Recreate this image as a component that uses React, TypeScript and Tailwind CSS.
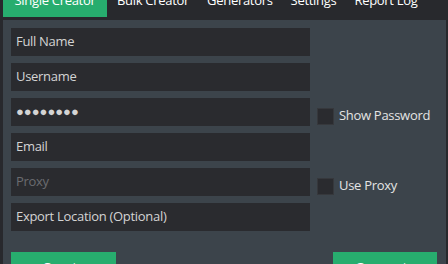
import React from "react";

const fields = [
  { text: "Full Name", ph: false, cb: "" },
  { text: "Username", ph: false, cb: "" },
  { text: "●●●●●●●●", ph: false, cb: "Show Password", pw: true },
  { text: "Email", ph: false, cb: "" },
  { text: "Proxy", ph: true, cb: "Use Proxy" },
  { text: "Export Location (Optional)", ph: false, cb: "" },
];

export default function App() {
  return (
    <div
      className="w-[448px] h-[264px] overflow-hidden bg-[#28292d] flex flex-col"
      style={{ fontFamily: '"Open Sans", "Noto Sans", sans-serif' }}
    >
      <div className="flex h-[32px] -mt-[15px] shrink-0 pl-[3px] text-[13px] text-white whitespace-nowrap tracking-[-0.3px]">
        <div className="w-[104px] h-full bg-[#27ad6e] flex items-center justify-center">Single Creator</div>
        <div className="h-full flex items-center pl-[10px] pr-[9px]">Bulk Creator</div>
        <div className="h-full flex items-center px-[9px]">Generators</div>
        <div className="h-full flex items-center px-[9px]">Settings</div>
        <div className="h-full flex items-center px-[9px]">Report Log</div>
      </div>
      <div className="mt-[3px] ml-[3px] mr-[2px] flex-1 bg-[#3c444b] pt-[8px] pl-[8px] flex flex-col">
        <div className="flex flex-col gap-[7px]">
          {fields.map((f, i) => (
            <div key={i} className="flex items-center">
              <div
                className={`w-[299px] h-[28px] bg-[#2a2b2f] flex items-center pl-[5px] whitespace-nowrap ${
                  f.ph ? "text-[#6b6c70]" : "text-[#d4d4d4]"
                } ${f.pw ? "text-[13px] tracking-[0px] text-[#c8c8c8]" : "text-[13px] tracking-[-0.3px]"}`}
              >
                {f.text}
              </div>
              {f.cb && (
                <div className="flex items-center ml-[7px] mt-[8px]">
                  <div className="w-[17px] h-[17px] bg-[#2a2b2f] border border-[#36383c]" />
                  <span className="ml-[5px] text-[13px] tracking-[-0.3px] text-[#e4e4e4]">{f.cb}</span>
                </div>
              )}
            </div>
          ))}
        </div>
        <div className="flex justify-between mt-[21px] pr-[9px]">
          <div className="w-[105px] h-[30px] bg-[#27ad6e] text-white text-[14px] leading-[19px] flex justify-center pt-[6px]">Create</div>
          <div className="w-[104px] h-[30px] bg-[#27ad6e] text-white text-[14px] leading-[19px] flex justify-center pt-[6px]">Generate</div>
        </div>
      </div>
    </div>
  );
}
